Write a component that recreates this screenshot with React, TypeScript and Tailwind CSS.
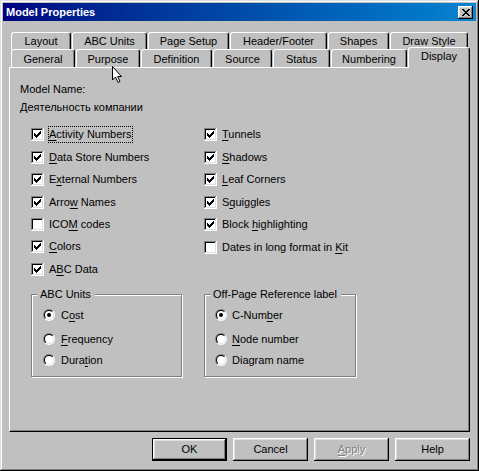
import React from 'react';

const font = { fontFamily: '"Liberation Sans", Arial, sans-serif' };

const CheckBox = ({ checked }: { checked: boolean }) => {
  const cols = [3, 4, 5, 6, 7, 8, 9];
  const tops = [5, 6, 7, 6, 5, 4, 3];
  return (
    <svg width="13" height="13" viewBox="0 0 13 13" className="shrink-0" shapeRendering="crispEdges">
      <rect x="0" y="0" width="13" height="13" fill="#fff" />
      <rect x="0" y="0" width="12" height="1" fill="#808080" />
      <rect x="0" y="0" width="1" height="12" fill="#808080" />
      <rect x="1" y="1" width="10" height="1" fill="#000" />
      <rect x="1" y="1" width="1" height="10" fill="#000" />
      <rect x="1" y="11" width="11" height="1" fill="#dfdfdf" />
      <rect x="11" y="1" width="1" height="11" fill="#dfdfdf" />
      {checked && cols.map((x, i) => <rect key={x} x={x} y={tops[i]} width="1" height="3" fill="#000" />)}
    </svg>
  );
};

const Radio = ({ on }: { on: boolean }) => (
  <svg width="12" height="12" viewBox="0 0 12 12" className="shrink-0">
    <defs>
      <linearGradient id="rOuter" x1="0" y1="0" x2="1" y2="1">
        <stop offset="0.5" stopColor="#808080" />
        <stop offset="0.5" stopColor="#ffffff" />
      </linearGradient>
      <linearGradient id="rInner" x1="0" y1="0" x2="1" y2="1">
        <stop offset="0.5" stopColor="#000000" />
        <stop offset="0.5" stopColor="#dfdfdf" />
      </linearGradient>
    </defs>
    <circle cx="6" cy="6" r="6" fill="url(#rOuter)" />
    <circle cx="6" cy="6" r="5" fill="url(#rInner)" />
    <circle cx="6" cy="6" r="4" fill="#fff" />
    {on && <circle cx="6" cy="6" r="2" fill="#000" />}
  </svg>
);

// label with one underlined access key
const L = ({ pre, k, post }: { pre?: string; k?: string; post?: string }) => (
  <span className="whitespace-pre">
    {pre}
    {k && <u className="underline underline-offset-[2px]">{k}</u>}
    {post}
  </span>
);

const tabsBack = [
  { label: 'Layout', w: 'w-[60px]' },
  { label: 'ABC Units', w: 'w-[75px]' },
  { label: 'Page Setup', w: 'w-[81px]' },
  { label: 'Header/Footer', w: 'w-[97px]' },
  { label: 'Shapes', w: 'w-[61px]' },
  { label: 'Draw Style', w: 'w-[78px]' },
];

const tabsFront = [
  { label: 'General', w: 'w-[64px]' },
  { label: 'Purpose', w: 'w-[64px]' },
  { label: 'Definition', w: 'w-[71px]' },
  { label: 'Source', w: 'w-[59px]' },
  { label: 'Status', w: 'w-[57px]' },
  { label: 'Numbering', w: 'w-[76px]' },
];

const tabCls =
  'flex items-center justify-center border-t border-l border-r border-t-white border-l-white border-r-black rounded-tl-[3px] rounded-tr-[3px] shadow-[inset_-1px_0_#808080] bg-[#c0c0c0] shrink-0';

const leftChecks = [
  { el: <L k="A" post="ctivity Numbers" />, on: true, h: 'h-[23px]', focus: true },
  { el: <L k="D" post="ata Store Numbers" />, on: true, h: 'h-[22px]' },
  { el: <L pre="E" k="x" post="ternal Numbers" />, on: true, h: 'h-[23px]' },
  { el: <L pre="Arro" k="w" post=" Names" />, on: true, h: 'h-[22px]' },
  { el: <L pre="ICO" k="M" post=" codes" />, on: false, h: 'h-[22px]' },
  { el: <L k="C" post="olors" />, on: true, h: 'h-[23px]' },
  { el: <L pre="A" k="B" post="C Data" />, on: true, h: 'h-[22px]' },
];

const rightChecks = [
  { el: <L k="T" post="unnels" />, on: true, h: 'h-[23px]' },
  { el: <L k="S" post="hadows" />, on: true, h: 'h-[22px]' },
  { el: <L k="L" post="eaf Corners" />, on: true, h: 'h-[23px]' },
  { el: <L pre="S" k="q" post="uiggles" />, on: true, h: 'h-[22px]' },
  { el: <L pre="Block " k="h" post="ighlighting" />, on: true, h: 'h-[23px]' },
  { el: <L pre="Dates in long format in " k="K" post="it" />, on: false, h: 'h-[22px]' },
];

const raised =
  'shadow-[inset_-1px_-1px_#000,inset_1px_1px_#fff,inset_-2px_-2px_#808080,inset_2px_2px_#dfdfdf]';

export default function App() {
  return (
    <div
      style={font}
      className="relative w-[479px] h-[471px] bg-[#c0c0c0] p-[3px] text-[11px] leading-[13px] text-black select-none shadow-[inset_-1px_-1px_#000,inset_1px_1px_#dfdfdf,inset_-2px_-2px_#808080,inset_2px_2px_#fff]"
    >
      {/* Title bar */}
      <div className="h-[18px] flex items-center justify-between bg-gradient-to-r from-[#000080] to-[#1084d0]">
        <span className="pl-[3px] text-white font-bold text-[11px]">Model Properties</span>
        <div className={`mr-[3px] w-[15px] h-[13px] bg-[#c0c0c0] flex items-center justify-center ${raised}`}>
          <svg width="8" height="7" viewBox="0 0 8 7" shapeRendering="crispEdges">
            {[0, 1, 2, 3, 4, 5, 6].map((y) => {
              const a = y <= 3 ? y : 6 - y;
              return (
                <g key={y}>
                  <rect x={a} y={y} width="2" height="1" fill="#000" />
                  <rect x={6 - a} y={y} width="2" height="1" fill="#000" />
                </g>
              );
            })}
          </svg>
        </div>
      </div>

      {/* Back tab row */}
      <div className="mt-[11px] ml-[8px] flex gap-[1px] h-[17px]">
        {tabsBack.map((t) => (
          <div key={t.label} className={`${tabCls} ${t.w} h-[17px]`}>
            {t.label}
          </div>
        ))}
      </div>

      {/* Front tab row */}
      <div className="ml-[8px] flex items-start gap-[1px] h-[18px]">
        {tabsFront.map((t) => (
          <div key={t.label} className={`${tabCls} ${t.w} h-[18px] pt-[1px]`}>
            {t.label}
          </div>
        ))}
        <div className={`${tabCls} relative z-10 w-[62px] h-[21px] -mt-[2px] items-start pt-[2px]`}>Display</div>
      </div>

      {/* Panel */}
      <div className="ml-[6px] w-[461px] h-[365px] border-t border-l border-r border-b border-t-white border-l-white border-r-black border-b-black shadow-[inset_-1px_-1px_#808080] flex flex-col pl-[10px]">
        <div className="mt-[15px]">Model Name:</div>
        <div className="mt-[5px]">Деятельность компании</div>

        <div className="mt-[9px] ml-[11px] flex">
          <div className="w-[173px] flex flex-col">
            {leftChecks.map((c, i) => (
              <div key={i} className={`flex items-center ${c.h}`}>
                <CheckBox checked={c.on} />
                <span
                  className={`ml-[4px] leading-[15px] border ${
                    c.focus ? 'border-dotted border-black' : 'border-transparent'
                  }`}
                >
                  {c.el}
                </span>
              </div>
            ))}
          </div>
          <div className="flex flex-col">
            {rightChecks.map((c, i) => (
              <div key={i} className={`flex items-center ${c.h}`}>
                <CheckBox checked={c.on} />
                <span className="ml-[4px] leading-[15px] border border-transparent">{c.el}</span>
              </div>
            ))}
          </div>
        </div>

        <div className="mt-[14px] ml-[11px] flex">
          <div className="relative w-[151px] h-[83px] border border-[#808080] shadow-[inset_1px_1px_#fff,1px_1px_#fff] pl-[11px] pt-[10px]">
            <span className="absolute left-[5px] -top-[7px] pl-[3px] pr-[4px] bg-[#c0c0c0]">ABC Units</span>
            <div className="h-[20px] flex items-center gap-[6px]">
              <Radio on />
              <L pre="C" k="o" post="st" />
            </div>
            <div className="mt-[4px] h-[20px] flex items-center gap-[6px]">
              <Radio on={false} />
              <L k="F" post="requency" />
            </div>
            <div className="mt-[1px] h-[20px] flex items-center gap-[6px]">
              <Radio on={false} />
              <L pre="Dura" k="t" post="ion" />
            </div>
          </div>

          <div className="ml-[22px] relative w-[152px] h-[83px] border border-[#808080] shadow-[inset_1px_1px_#fff,1px_1px_#fff] pl-[10px] pt-[10px]">
            <span className="absolute left-[6px] -top-[7px] pl-[2px] pr-[4px] bg-[#c0c0c0] whitespace-nowrap">
              Off-Page Reference label
            </span>
            <div className="h-[20px] flex items-center gap-[5px]">
              <Radio on />
              <L pre="C-Num" k="b" post="er" />
            </div>
            <div className="mt-[4px] h-[20px] flex items-center gap-[5px]">
              <Radio on={false} />
              <L k="N" post="ode number" />
            </div>
            <div className="mt-[1px] h-[20px] flex items-center gap-[5px]">
              <Radio on={false} />
              <span>Diagram name</span>
            </div>
          </div>
        </div>
      </div>

      {/* Buttons */}
      <div className="mt-[6px] ml-[6px] w-[461px] flex justify-end gap-[6px]">
        <button className={`w-[75px] h-[23px] bg-[#c0c0c0] border border-black flex items-center justify-center ${raised}`}>
          OK
        </button>
        <button className={`w-[75px] h-[23px] bg-[#c0c0c0] flex items-center justify-center ${raised}`}>Cancel</button>
        <button
          className={`w-[75px] h-[23px] bg-[#c0c0c0] flex items-center justify-center text-[#808080] [text-shadow:1px_1px_0_#fff] ${raised}`}
        >
          <L k="A" post="pply" />
        </button>
        <button className={`w-[75px] h-[23px] bg-[#c0c0c0] flex items-center justify-center ${raised}`}>Help</button>
      </div>

      {/* Mouse pointer */}
      <svg className="absolute left-[112px] top-[66px] z-20" width="12" height="18" viewBox="0 0 12 18">
        <path d="M0.5 0.5 L0.5 14 L3.5 11 L6 16.5 L8 15.5 L5.7 10.5 L9.5 10.5 Z" fill="#fff" stroke="#000" strokeWidth="1" />
      </svg>
    </div>
  );
}
